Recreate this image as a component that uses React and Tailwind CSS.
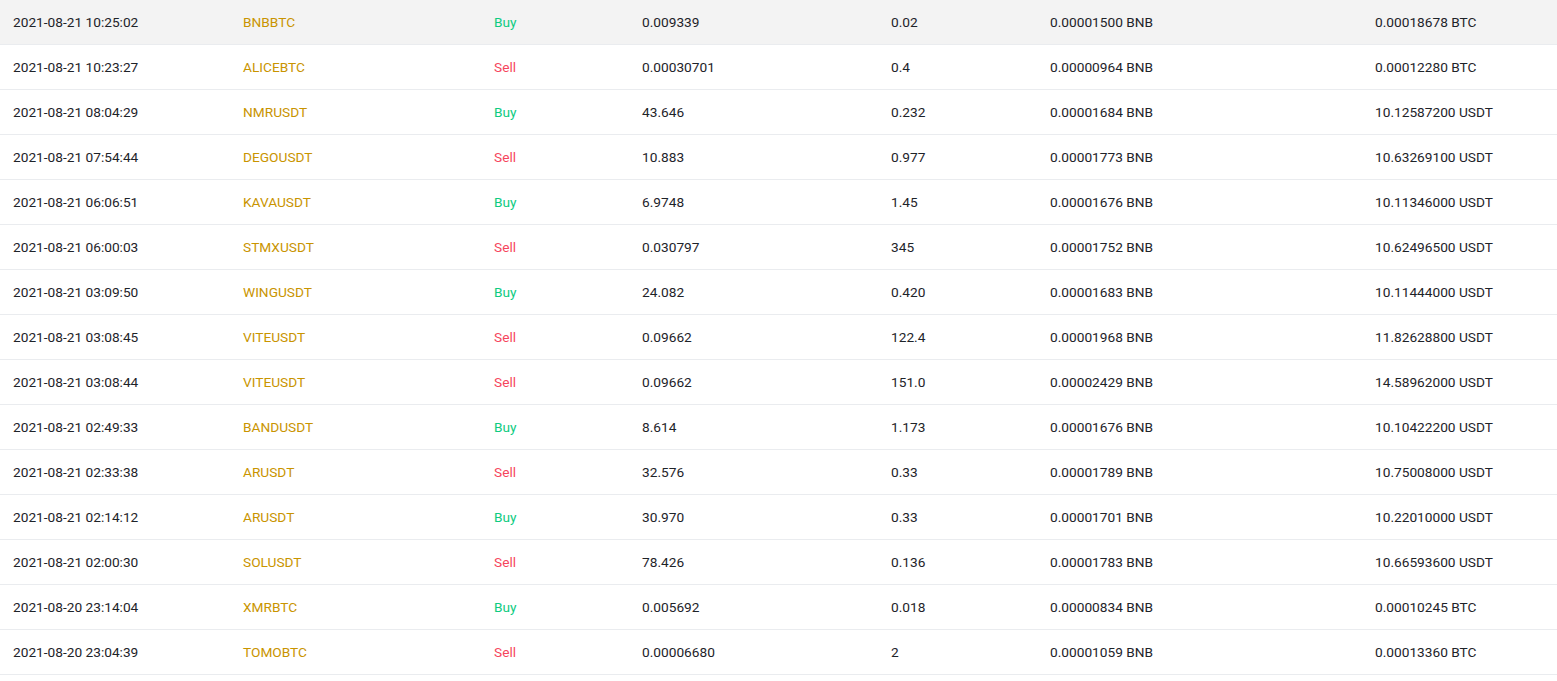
import React from 'react';

const trades = [
  ['2021-08-21 10:25:02', 'BNBBTC', 'Buy', '0.009339', '0.02', '0.00001500 BNB', '0.00018678 BTC'],
  ['2021-08-21 10:23:27', 'ALICEBTC', 'Sell', '0.00030701', '0.4', '0.00000964 BNB', '0.00012280 BTC'],
  ['2021-08-21 08:04:29', 'NMRUSDT', 'Buy', '43.646', '0.232', '0.00001684 BNB', '10.12587200 USDT'],
  ['2021-08-21 07:54:44', 'DEGOUSDT', 'Sell', '10.883', '0.977', '0.00001773 BNB', '10.63269100 USDT'],
  ['2021-08-21 06:06:51', 'KAVAUSDT', 'Buy', '6.9748', '1.45', '0.00001676 BNB', '10.11346000 USDT'],
  ['2021-08-21 06:00:03', 'STMXUSDT', 'Sell', '0.030797', '345', '0.00001752 BNB', '10.62496500 USDT'],
  ['2021-08-21 03:09:50', 'WINGUSDT', 'Buy', '24.082', '0.420', '0.00001683 BNB', '10.11444000 USDT'],
  ['2021-08-21 03:08:45', 'VITEUSDT', 'Sell', '0.09662', '122.4', '0.00001968 BNB', '11.82628800 USDT'],
  ['2021-08-21 03:08:44', 'VITEUSDT', 'Sell', '0.09662', '151.0', '0.00002429 BNB', '14.58962000 USDT'],
  ['2021-08-21 02:49:33', 'BANDUSDT', 'Buy', '8.614', '1.173', '0.00001676 BNB', '10.10422200 USDT'],
  ['2021-08-21 02:33:38', 'ARUSDT', 'Sell', '32.576', '0.33', '0.00001789 BNB', '10.75008000 USDT'],
  ['2021-08-21 02:14:12', 'ARUSDT', 'Buy', '30.970', '0.33', '0.00001701 BNB', '10.22010000 USDT'],
  ['2021-08-21 02:00:30', 'SOLUSDT', 'Sell', '78.426', '0.136', '0.00001783 BNB', '10.66593600 USDT'],
  ['2021-08-20 23:14:04', 'XMRBTC', 'Buy', '0.005692', '0.018', '0.00000834 BNB', '0.00010245 BTC'],
  ['2021-08-20 23:04:39', 'TOMOBTC', 'Sell', '0.00006680', '2', '0.00001059 BNB', '0.00013360 BTC'],
];

export default function App() {
  return (
    <div className="w-[1557px] min-h-[681px] bg-white text-[13.7px] text-[#1e2329] font-['Roboto',sans-serif]">
      {trades.map(([time, pair, side, price, qty, fee, total], i) => (
        <div
          key={i}
          className={`grid grid-cols-[230px_251px_148px_249px_159px_325px_195px] h-[45px] pt-px items-center border-b border-[#eaecef] ${i === 0 ? 'bg-[#f3f3f3]' : 'bg-white'}`}
        >
          <div className="pl-[13px]">{time}</div>
          <div className="pl-[13px] text-[#c99400]">{pair}</div>
          <div className={`pl-[13px] ${side === 'Buy' ? 'text-[#0ecb81]' : 'text-[#f6465d]'}`}>{side}</div>
          <div className="pl-[13px]">{price}</div>
          <div className="pl-[13px]">{qty}</div>
          <div className="pl-[13px]">{fee}</div>
          <div className="pl-[13px]">{total}</div>
        </div>
      ))}
    </div>
  );
}
